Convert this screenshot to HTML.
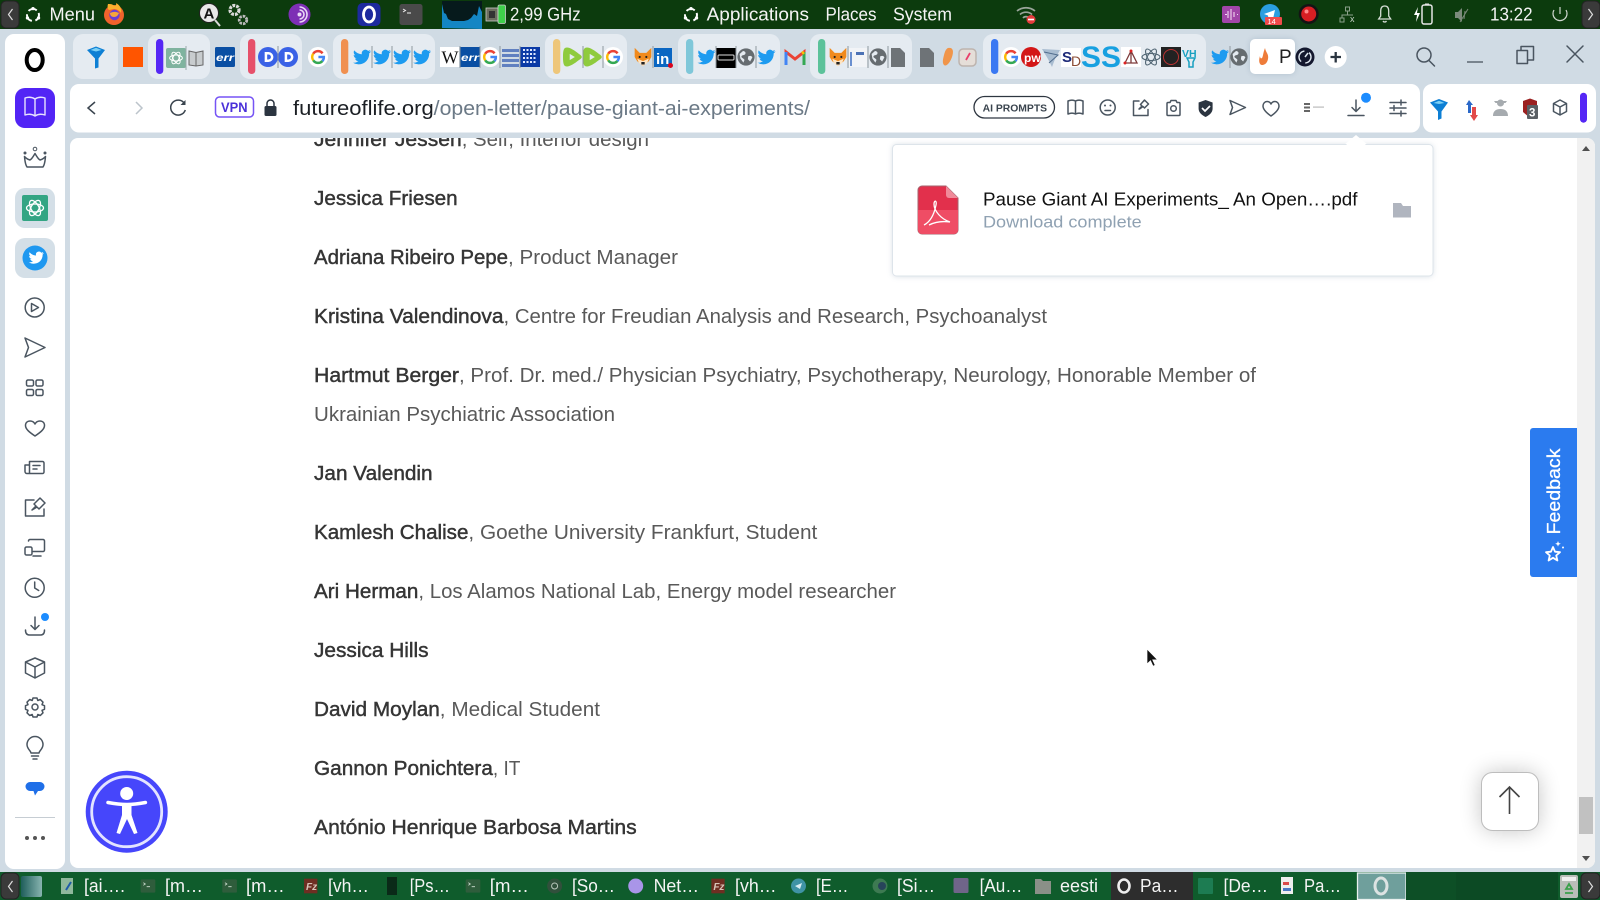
<!DOCTYPE html>
<html><head><meta charset="utf-8"><title>Pause Giant AI Experiments</title>
<style>
html,body{margin:0;padding:0;width:1600px;height:900px;overflow:hidden;background:#d0dbe4}
svg{display:block}
text{font-family:"Liberation Sans",sans-serif;white-space:pre}
.b{font-size:20.5px;font-weight:400;fill:#353535;stroke:#353535;stroke-width:.45px}
.r{font-size:20.5px;fill:#595959}
.w{font-size:18.5px;fill:#f4f4f4}
.s{fill:none;stroke:#4a5560;stroke-width:1.5;stroke-linecap:round;stroke-linejoin:round}
.d{fill:#e5ebf1}
</style></head><body>
<svg width="1600" height="900" viewBox="0 0 1600 900" xmlns="http://www.w3.org/2000/svg">
<defs>
<symbol id="tw" viewBox="0 0 24 24"><path fill="#1d9bf0" d="M23.95 4.57a10 10 0 01-2.82.77 4.96 4.96 0 002.16-2.72c-.95.55-2 .96-3.12 1.19a4.92 4.92 0 00-8.38 4.48C7.69 8.09 4.07 6.13 1.64 3.16a4.82 4.82 0 00-.67 2.48c0 1.71.87 3.21 2.19 4.1a4.9 4.9 0 01-2.23-.62v.06c0 2.38 1.7 4.37 3.95 4.83-.41.11-.85.17-1.3.17-.31 0-.62-.03-.92-.08.63 1.96 2.45 3.39 4.61 3.43A9.87 9.87 0 010 19.54a14 14 0 007.56 2.21c9.05 0 14-7.5 14-13.98 0-.21 0-.42-.02-.63a9.9 9.9 0 002.46-2.55z"/></symbol>
<symbol id="g" viewBox="0 0 24 24"><circle cx="12" cy="12" r="12" fill="#fff"/><path d="M17.5 7.6A7 7 0 0 0 6.3 8" fill="none" stroke="#ea4335" stroke-width="3"/><path d="M6.3 8a7 7 0 0 0 0 8" fill="none" stroke="#fbbc05" stroke-width="3"/><path d="M6.3 16a7 7 0 0 0 11 .8" fill="none" stroke="#34a853" stroke-width="3"/><path d="M17.3 16.8A7 7 0 0 0 19 12h-6.5" fill="none" stroke="#4285f4" stroke-width="3"/></symbol>
<symbol id="globe" viewBox="0 0 24 24"><circle cx="12" cy="12" r="11.500" fill="#666c70"/><path d="M8 4c3 .5 4 2 3 4s-4 1-5 3 3 2.500 4 5l-1.500 3.500-4-5.500-1-6zM15 11c3-1 4.500-.5 5.500 1.500l-3 5.500-3-3z" fill="#e5ebf1"/></symbol>
<symbol id="fox" viewBox="0 0 24 24"><path d="M2 1l6 6h8l6-6v11l-3 5-7 6-7-6-3-5z" fill="#f08a1d"/><path d="M5 14l7 3 7-3-2 5-5 4-5-4z" fill="#fde3c2"/><rect x="10" y="18" width="4" height="3" fill="#222"/><circle cx="8" cy="12" r="1.300" fill="#222"/><circle cx="16" cy="12" r="1.300" fill="#222"/></symbol>
<symbol id="dd" viewBox="0 0 24 24"><circle cx="12" cy="12" r="12" fill="#3a62e6"/><path d="M8 6h4.500a6 6 0 0 1 0 12H8zM11 9v6h1.500a3 3 0 0 0 0-6z" fill="#fff" fill-rule="evenodd"/></symbol>
<symbol id="play" viewBox="0 0 24 24"><path d="M5 0C1 0 0 3 0 12s1 12 5 12c4 0 10-4 15-8 5-3 5-5 0-8C15 4 9 0 5 0z" fill="#8fcb3d"/><path d="M8.500 8l6.500 4-6.500 4z" fill="#e5ebf1"/></symbol>
<symbol id="gpt" viewBox="0 0 24 24" ><g fill="none" stroke="#fff" stroke-width="1.300"><ellipse cx="12" cy="12" rx="8.500" ry="4"/><ellipse cx="12" cy="12" rx="8.500" ry="4" transform="rotate(60 12 12)"/><ellipse cx="12" cy="12" rx="8.500" ry="4" transform="rotate(120 12 12)"/></g></symbol>
<symbol id="term" viewBox="0 0 24 24"><rect x="1" y="2" width="22" height="20" rx="2" fill="#2f5d3c"/><path d="M5 7l3 2-3 2M10 13h5" stroke="#cfe0d2" fill="none" stroke-width="1.200"/></symbol>
<symbol id="fz" viewBox="0 0 24 24"><rect x="2" y="1" width="20" height="22" fill="#6e2e22"/><text x="5" y="18" font-size="15" font-weight="700" font-style="italic" fill="#d8c4b8">Fz</text></symbol>
<symbol id="ub" viewBox="0 0 24 24"><circle cx="12" cy="12" r="8" fill="none" stroke="#fff" stroke-width="2.600" stroke-dasharray="12 4.800" transform="rotate(-20 12 12)"/><circle cx="12" cy="3.500" r="2.200" fill="#fff"/><circle cx="4.600" cy="16" r="2.200" fill="#fff"/><circle cx="19.400" cy="16" r="2.200" fill="#fff"/></symbol>
</defs>

<!-- backgrounds -->
<rect width="1600" height="900" fill="#d0dbe4"/>
<rect width="1600" height="29" fill="#0c3b0d"/>
<rect y="872" width="1600" height="28" fill="#0f5c2c"/>
<rect x="5" y="34" width="60" height="835" rx="9" fill="#fff"/>

<!-- page content -->
<rect x="70" y="138" width="1525" height="730" rx="8" fill="#fff"/>
<g>
<text class="b" x="314" y="146" textLength="147.700" lengthAdjust="spacingAndGlyphs">Jennifer Jessen</text><text class="r" x="461.700" y="146" textLength="187.300" lengthAdjust="spacingAndGlyphs">, Self, Interior design</text>
<text class="b" x="314" y="205" textLength="143.700" lengthAdjust="spacingAndGlyphs">Jessica Friesen</text>
<text class="b" x="314" y="264" textLength="194" lengthAdjust="spacingAndGlyphs">Adriana Ribeiro Pepe</text><text class="r" x="508" y="264" textLength="170" lengthAdjust="spacingAndGlyphs">, Product Manager</text>
<text class="b" x="314" y="323" textLength="189.500" lengthAdjust="spacingAndGlyphs">Kristina Valendinova</text><text class="r" x="503.500" y="323" textLength="543.500" lengthAdjust="spacingAndGlyphs">, Centre for Freudian Analysis and Research, Psychoanalyst</text>
<text class="b" x="314" y="382" textLength="145" lengthAdjust="spacingAndGlyphs">Hartmut Berger</text><text class="r" x="459" y="382" textLength="797" lengthAdjust="spacingAndGlyphs">, Prof. Dr. med./ Physician Psychiatry, Psychotherapy, Neurology, Honorable Member of</text>
<text class="r" x="314" y="421" textLength="301" lengthAdjust="spacingAndGlyphs">Ukrainian Psychiatric Association</text>
<text class="b" x="314" y="480" textLength="118.600" lengthAdjust="spacingAndGlyphs">Jan Valendin</text>
<text class="b" x="314" y="539" textLength="154.400" lengthAdjust="spacingAndGlyphs">Kamlesh Chalise</text><text class="r" x="468.400" y="539" textLength="348.900" lengthAdjust="spacingAndGlyphs">, Goethe University Frankfurt, Student</text>
<text class="b" x="314" y="598" textLength="104.400" lengthAdjust="spacingAndGlyphs">Ari Herman</text><text class="r" x="418.400" y="598" textLength="477.600" lengthAdjust="spacingAndGlyphs">, Los Alamos National Lab, Energy model researcher</text>
<text class="b" x="314" y="657" textLength="114.600" lengthAdjust="spacingAndGlyphs">Jessica Hills</text>
<text class="b" x="314" y="716" textLength="125.800" lengthAdjust="spacingAndGlyphs">David Moylan</text><text class="r" x="439.800" y="716" textLength="160.200" lengthAdjust="spacingAndGlyphs">, Medical Student</text>
<text class="b" x="314" y="775" textLength="178.900" lengthAdjust="spacingAndGlyphs">Gannon Ponichtera</text><text class="r" x="492.900" y="775" textLength="27.500" lengthAdjust="spacingAndGlyphs">, IT</text>
<text class="b" x="314" y="834" textLength="322.700" lengthAdjust="spacingAndGlyphs">António Henrique Barbosa Martins</text>
</g>
<!-- strip hiding clipped text -->
<rect x="70" y="130" width="1530" height="8" fill="#d0dbe4"/>
<rect x="1595" y="130" width="5" height="740" fill="#d0dbe4"/>

<!-- scrollbar -->
<path d="M1577 138h10a8 8 0 0 1 8 8v714a8 8 0 0 1-8 8h-10z" fill="#f1f1f1"/>
<rect x="1579" y="797" width="14" height="37" fill="#c1c1c1"/>
<path d="M1582 151l4-5 4 5z" fill="#505050"/><path d="M1582 856l4 5 4-5z" fill="#505050"/>

<!-- feedback -->
<path d="M1577 428h-44a3 3 0 0 0-3 3v143a3 3 0 0 0 3 3h44z" fill="#2b7bef"/>
<text transform="translate(1560,534.500) rotate(-90)" font-size="18.500" font-weight="400" fill="#fff" textLength="86" lengthAdjust="spacingAndGlyphs" stroke="#fff" stroke-width=".3">Feedback</text>
<path d="M1553 547l2 4.700 5 .5-3.800 3.300 1.200 5-4.400-2.700-4.400 2.700 1.200-5-3.800-3.300 5-.5z" fill="none" stroke="#fff" stroke-width="1.800" stroke-linejoin="round"/>
<path d="M1558 541l.8 2 2 .8-2 .8-.8 2-.8-2-2-.8 2-.8z" fill="#fff"/><circle cx="1563" cy="547.500" r="1" fill="#fff"/>

<!-- scroll top -->
<defs><filter id="sh" x="-60%" y="-60%" width="220%" height="220%"><feGaussianBlur stdDeviation="11"/></filter><filter id="sh2" x="-30%" y="-30%" width="160%" height="160%"><feGaussianBlur stdDeviation="3"/></filter></defs>
<rect x="1481" y="772" width="58" height="59" rx="12" fill="#000" opacity=".22" filter="url(#sh)"/>
<rect x="1481.500" y="772.500" width="57" height="58" rx="11" fill="#fff" stroke="#bdbdbd"/>
<path d="M1509.500 814v-27M1499.500 797l10-10 10 10" fill="none" stroke="#444" stroke-width="1.600"/>

<!-- accessibility -->
<circle cx="126.700" cy="811.700" r="41" fill="#4646fb"/>
<circle cx="126.700" cy="811.700" r="35" fill="none" stroke="#e3e4ff" stroke-width="2.800"/>
<circle cx="126.700" cy="793.500" r="6.500" fill="#fff"/>
<path d="M108 802.500c8 1.500 14 2 18.700 2s10.700-.5 18.700-2" fill="none" stroke="#fff" stroke-width="3.500" stroke-linecap="round"/>
<path d="M122 804h9.500v11l6 18-3.500 1-7-15-7 15-3.500-1 5.500-18z" fill="#fff"/>

<!-- popup -->
<rect x="892.500" y="144.500" width="540.500" height="132" rx="4" fill="#8ea2b5" opacity=".35" filter="url(#sh2)"/>
<path d="M1344 145l12-10 12 10z" fill="#fff"/>
<rect x="892.500" y="144.500" width="540.500" height="131.500" rx="4" fill="#fff" stroke="#dde4ea"/>
<path d="M1346 145l10-9 10 9z" fill="#fff"/>
<path d="M922 186h24l12 12v32a4 4 0 0 1-4 4h-32a4 4 0 0 1-4-4v-40a4 4 0 0 1 4-4z" fill="#e2304c" stroke="#a5636e"/>
<path d="M918 210h40v20a4 4 0 0 1-4 4h-32a4 4 0 0 1-4-4z" fill="#ef4d65"/>
<path d="M946 186l12 12h-9a3 3 0 0 1-3-3z" fill="#f08a99"/>
<path d="M924 225c6-3 10-10 12-20 1-5-2-5-2-1 0 7 7 15 16 18-7-1-15 0-21 3" fill="none" stroke="#fff" stroke-width="1.300"/>
<text x="983" y="205.500" font-size="18.500" fill="#111" textLength="374.500" lengthAdjust="spacingAndGlyphs">Pause Giant AI Experiments_ An Open….pdf</text>
<text x="983" y="227.500" font-size="17" fill="#8fa1b2" textLength="158.700" lengthAdjust="spacingAndGlyphs">Download complete</text>
<path d="M1393 203h8l2 3h8v11.500h-18z" fill="#b0b5bf"/>

<!-- sidebar -->
<ellipse cx="34.700" cy="60" rx="8" ry="10" fill="none" stroke="#000" stroke-width="4"/>
<rect x="15" y="88" width="40" height="40" rx="10" fill="#5224f5"/>
<path d="M35 99c-3-2-7-2-10-1v17c3-1 7-1 10 1 3-2 7-2 10-1V98c-3-1-7-1-10 1zM35 99v17" fill="none" stroke="#e7e2ff" stroke-width="1.400" stroke-linejoin="round"/>
<path class="s" d="M27 167h16c2-3 2-6 2.500-10.500-2 2.500-4 3-5.500 3.500-2-1-3.500-4-5-6.500-1.500 2.500-3 5.500-5 6.500-1.500-.5-3.500-1-5.500-3.500.5 4.500.5 7.500 2.500 10.500z"/><circle cx="35" cy="149" r="1.800" fill="none" stroke="#4a5560"/><circle cx="25" cy="153" r="1.500" fill="#4a5560"/><circle cx="45" cy="153" r="1.500" fill="#4a5560"/>
<rect x="15" y="188" width="40" height="40" rx="10" fill="#d4dfe7"/>
<rect x="22" y="195" width="26" height="26" rx="2" fill="#33a583"/><use href="#gpt" x="23" y="196" width="24" height="24"/>
<rect x="15" y="238" width="40" height="40" rx="10" fill="#d4dfe7"/>
<circle cx="35" cy="258" r="12.500" fill="#1f98f0"/>
<path d="M44 253a6 6 0 0 1-2 .6 3 3 0 0 0 1.300-1.700 6 6 0 0 1-2 .8 3 3 0 0 0-5.200 2.800c-2.500 0-5-1.300-6.500-3.200a3 3 0 0 0 1 4 3 3 0 0 1-1.400-.4 3 3 0 0 0 2.400 3 3 3 0 0 1-1.400.1 3 3 0 0 0 2.900 2.100 6 6 0 0 1-4.400 1.200c5.500 3.500 14 .5 14-7.900a6 6 0 0 0 1.300-1.400z" fill="#fff"/>
<circle class="s" cx="34.700" cy="307.500" r="9.500"/><path class="s" d="M31.500 303.500l7 4-7 4z"/>
<path class="s" d="M25 338l20 9.500-20 9.500 3.500-9.500z"/>
<g class="s"><rect x="26.500" y="380" width="7" height="6" rx="1.500"/><rect x="36" y="380" width="7" height="6" rx="1.500"/><rect x="26.500" y="389.500" width="7" height="6" rx="1.500"/><rect x="36" y="389.500" width="7" height="6" rx="1.500"/></g>
<path class="s" d="M35 436c-6-4-9.500-7-9.500-10.500 0-3 2-4.500 4.500-4.500 2 0 4 1 5 3 1-2 3-3 5-3 2.500 0 4.500 1.500 4.500 4.500C44.500 429 41 432 35 436z"/>
<path class="s" d="M29.500 461.500h13a1.500 1.500 0 0 1 1.500 1.500v9a1.500 1.500 0 0 1-1.500 1.500H27a2 2 0 0 1-2-2v-6.500h4.500M29.500 461.500v12M33 465.500h7M33 469h4"/>
<path class="s" d="M34 500h-8.500v16H44v-7M32 510l4-4-2-2 6-6 5 5-6 6-2-2-5 3z"/>
<path class="s" d="M28.500 541a1.500 1.500 0 0 1 1.500-1.500h13a1.500 1.500 0 0 1 1.500 1.500v9a1.500 1.500 0 0 1-1.500 1.500H33M33 556h8"/><rect class="s" x="25" y="547" width="7" height="8" rx="1.500"/>
<circle class="s" cx="34.700" cy="587.800" r="9.500"/><path class="s" d="M34.700 582v6l4 2.500"/>
<path class="s" d="M35 617v12M31 625.500l4 4 4-4M25.500 630c0 4 2 5 4 5h11c2 0 4-1 4-5"/><circle cx="45" cy="617" r="4" fill="#1c8cff"/>
<path class="s" d="M35 658l9.500 4v11L35 678l-9.500-5v-11zM25.500 662l9.500 5 9.500-5M35 667v11"/>
<circle class="s" cx="35" cy="707" r="3"/><path class="s" d="M33 698h4l.8 2.500 2.500-1 2.700 2.700-1 2.500 2.500 1v3.600l-2.500 1 1 2.500-2.700 2.700-2.500-1-.8 2.500h-4l-.8-2.500-2.500 1-2.700-2.700 1-2.500-2.500-1v-3.600l2.500-1-1-2.500 2.700-2.700 2.500 1z"/>
<path class="s" d="M31 753c0-2-4-4-4-8.500a8 8 0 0 1 16 0c0 4.500-4 6.500-4 8.500zM31.500 756h7M33 759h4"/>
<path d="M30 782h10a4.500 4.500 0 0 1 0 9h-2l-3 4.500-1.500-4.500H30a4.500 4.500 0 0 1 0-9z" fill="#1f6fe8"/>
<rect x="15" y="817" width="40" height="1" fill="#c6cdd3"/>
<circle cx="27" cy="838" r="2" fill="#555"/><circle cx="35" cy="838" r="2" fill="#555"/><circle cx="43" cy="838" r="2" fill="#555"/>

<!-- tab strip -->
<rect class="d" x="73" y="34" width="45" height="45" rx="10"/>
<path d="M87 50l9-3.500 9 3.500-6.500 8.500v9l-3.500 1v-10z" fill="#0d7fd4"/><path d="M90.500 50l5.500-2.200 5.500 2.200-5.500 1.500z" fill="#7cd0f5"/>
<rect x="123" y="47" width="20" height="20" fill="#ff5500"/>
<rect class="d" x="148" y="34" width="62" height="45" rx="10"/>
<rect x="156" y="39" width="7.300" height="35" rx="3.600" fill="#5527f5"/>
<rect x="166" y="48" width="20" height="20" rx="2" fill="#7fb39f"/><use href="#gpt" x="167" y="49" width="18" height="18"/>
<rect x="185.500" y="46" width="1" height="24" fill="#9aa"/>
<path d="M189 51l7 1.500 7-1.500v14l-7 1-7-1zM196 52.500V66" fill="#c8ccce" stroke="#666" stroke-width="1"/>
<rect x="215" y="47" width="20" height="20" rx="1.500" fill="#0a4fa3"/><text x="216" y="61" font-size="10.500" font-style="italic" font-weight="700" fill="#fff" textLength="18" lengthAdjust="spacingAndGlyphs">err</text>
<rect class="d" x="240" y="34" width="62" height="45" rx="10"/>
<rect x="248" y="39" width="7.300" height="35" rx="3.600" fill="#e6506a"/>
<use href="#dd" x="258" y="47" width="20" height="20"/><use href="#dd" x="278" y="47" width="20" height="20"/>
<use href="#g" x="308" y="47" width="20" height="20"/>
<rect class="d" x="333" y="34" width="102" height="45" rx="10"/>
<rect x="341" y="39" width="7.300" height="35" rx="3.600" fill="#f09050"/>
<use href="#tw" x="352" y="48" width="20" height="18"/><use href="#tw" x="372" y="48" width="20" height="18"/><use href="#tw" x="392" y="48" width="20" height="18"/><use href="#tw" x="412" y="48" width="20" height="18"/>
<rect x="440" y="47" width="19" height="20" fill="#fff"/><text x="441.500" y="63.500" style="font-family:'Liberation Serif',serif" font-size="18" fill="#111">W</text>
<rect x="460" y="47" width="20" height="20" fill="#0a4fa3"/><text x="461" y="61" font-size="10.500" font-style="italic" font-weight="700" fill="#fff" textLength="18" lengthAdjust="spacingAndGlyphs">err</text>
<use href="#g" x="480" y="47" width="20" height="20"/>
<g fill="#3b62b5" opacity=".75"><rect x="502" y="49" width="17" height="3"/><rect x="502" y="54" width="17" height="3"/><rect x="502" y="59" width="17" height="3"/><rect x="502" y="64" width="17" height="3"/></g>
<rect x="520" y="47" width="20" height="20" fill="#0b3aa6"/><path d="M523 50h14M523 54h14M523 58h14M523 62h14" stroke="#dfe8ff" stroke-width="2" stroke-dasharray="2 1.500"/>
<rect class="d" x="545" y="34" width="82" height="45" rx="10"/>
<rect x="553" y="39" width="7.300" height="35" rx="3.600" fill="#eec67a"/>
<use href="#play" x="563" y="47" width="19" height="20"/><use href="#play" x="583" y="47" width="19" height="20"/>
<use href="#g" x="603" y="47" width="20" height="20"/>
<use href="#fox" x="633" y="47" width="20" height="20"/>
<rect x="654" y="48" width="18" height="19" fill="#0a66c2"/><text x="656" y="64" font-size="15" font-weight="700" fill="#fff">in</text><circle cx="670.500" cy="65.500" r="2.500" fill="#d9041d"/>
<rect class="d" x="678" y="34" width="102" height="45" rx="10"/>
<rect x="686" y="39" width="7.300" height="35" rx="3.600" fill="#7fc7d9"/>
<use href="#tw" x="697" y="48" width="19" height="18"/>
<rect x="716" y="48" width="20" height="20" fill="#000"/><rect x="718" y="55" width="16" height="5" rx="1" fill="none" stroke="#ddd"/>
<use href="#globe" x="737" y="48" width="18" height="18"/>
<use href="#tw" x="757" y="48" width="19" height="18"/>
<path d="M786 65V52l9 7 9-7v13" fill="none" stroke="#ea4335" stroke-width="3"/><path d="M786 52v13" stroke="#4285f4" stroke-width="3"/><path d="M804 52v13" stroke="#34a853" stroke-width="3"/><path d="M804 52l-2 1.500" stroke="#fbbc05" stroke-width="3"/>
<rect class="d" x="810" y="34" width="102" height="45" rx="10"/>
<rect x="818" y="39" width="7.300" height="35" rx="3.600" fill="#5cc29a"/>
<use href="#fox" x="828" y="47" width="20" height="20"/>
<rect x="849" y="48" width="18" height="19" fill="#f2f4f7"/><rect x="850" y="52" width="2" height="14" fill="#6a8fcf"/><rect x="856" y="52" width="8" height="3" fill="#4c72b5"/>
<use href="#globe" x="869" y="48" width="18" height="18"/>
<path d="M891 48h9l5 5v14h-14z" fill="#6e7377"/>
<path d="M920 48h9l5 5v14h-14z" fill="#6e7377"/>
<path d="M948 48c5-1 6 3 4 9s-6 10-8 8-1-6 0-10 2-6 4-7z" fill="#f0954a"/>
<rect x="959" y="49" width="17" height="17" rx="4" fill="#e5ded8" stroke="#bdb4ae" stroke-width="1.500"/><path d="M966 60l4-7" stroke="#e83f6a" stroke-width="1.800"/>
<rect class="d" x="983" y="34" width="223" height="45" rx="10"/>
<rect x="991" y="39" width="7.300" height="35" rx="3.600" fill="#3a78f2"/>
<use href="#g" x="1001" y="47" width="20" height="20"/>
<circle cx="1031" cy="57" r="10" fill="#d31717"/><text x="1024" y="62" font-size="12" font-weight="700" fill="#fff">pw</text>
<path d="M1042 49l18 1-5 9-3 8-4-8z" fill="#a9bdd1"/><path d="M1044 52l14 3-9 8" stroke="#506c8c" fill="none"/>
<rect x="1061" y="48" width="20" height="19" fill="#fff"/><text x="1062" y="62" font-size="15" font-weight="700" fill="#1d2a78">S</text><text x="1071" y="66" font-size="14" fill="#8a4b34">D</text>
<text x="1081" y="67" font-size="30" fill="#18a0e0" font-weight="700" textLength="20" lengthAdjust="spacingAndGlyphs">S</text><text x="1101" y="67" font-size="30" fill="#18a0e0" font-weight="700" textLength="20" lengthAdjust="spacingAndGlyphs">S</text>
<rect x="1121" y="47" width="20" height="20" fill="#fff"/><path d="M1125 63l6-12 6 12zM1131 51v12" fill="none" stroke="#7d3b3b" stroke-width="1.300"/><circle cx="1131" cy="51" r="1.500" fill="#d22"/><circle cx="1125" cy="63" r="1.500" fill="#d22"/>
<g fill="none" stroke="#4d6270" stroke-width="1.100"><ellipse cx="1151" cy="57" rx="9" ry="3.500"/><ellipse cx="1151" cy="57" rx="9" ry="3.500" transform="rotate(60 1151 57)"/><ellipse cx="1151" cy="57" rx="9" ry="3.500" transform="rotate(120 1151 57)"/></g>
<rect x="1161" y="47" width="20" height="20" fill="#222"/><circle cx="1171" cy="57" r="7.500" fill="none" stroke="#b33"/>
<text x="1182" y="57" font-size="10.500" font-weight="700" fill="#18a0c0">VH</text><path d="M1187 58h8l-2 4v5h-4v-5z" fill="none" stroke="#18a0c0" stroke-width="1.500"/>
<use href="#tw" x="1211" y="48" width="18" height="18"/>
<use href="#globe" x="1230" y="48" width="18" height="18"/>
<rect x="1250" y="39" width="45" height="35" rx="5" fill="#8ea2b5" opacity=".45" filter="url(#sh2)"/>
<rect x="1250" y="39" width="45" height="35" rx="5" fill="#fff"/>
<path d="M1265 48c1 5 4 6 3 11s-4 6-6 6-4-3-2-9c0 2 1 3 2 2s1-5 3-10z" fill="#ee7c3a"/>
<text x="1279" y="63" font-size="19" fill="#222">P</text>
<circle cx="1305" cy="57" r="9.500" fill="#14182e"/><circle cx="1305" cy="57" r="6" fill="none" stroke="#dfe7ef" stroke-width="1.400" stroke-dasharray="14 5" transform="rotate(130 1305 57)"/><path d="M1305 57l3-4" stroke="#dfe7ef" stroke-width="1.500"/>
<circle cx="1335.700" cy="57" r="11" fill="#fff"/><path d="M1330.500 57h10.500M1335.700 52v10.500" stroke="#2a3440" stroke-width="2.300"/>

<!-- window controls -->
<circle class="s" cx="1424" cy="55" r="7"/><path class="s" d="M1429 60.500l5.500 5.500"/>
<path d="M1467 62h16" stroke="#4a5560" stroke-width="1.300"/>
<path class="s" d="M1517 50.500h10.500v13H1517zM1521 50v-3.500h12.500V60H1528" stroke-width="1.200"/>
<path class="s" d="M1567 46l16 16M1583 46l-16 16" stroke-width="1.300"/>

<!-- address bar -->
<rect x="70" y="84" width="1350" height="48.500" rx="9" fill="#fff"/>
<path d="M95 102l-7 6 7 6" fill="none" stroke="#3a444e" stroke-width="1.500"/>
<path d="M136 102l6 6-6 6" fill="none" stroke="#bcc4cb" stroke-width="1.500"/>
<path d="M184.500 103.500a7.500 7.500 0 1 0 .8 6.500" fill="none" stroke="#3a444e" stroke-width="1.500"/><path d="M185.500 100v5h-5" fill="#3a444e"/>
<rect x="215.500" y="97" width="38" height="20" rx="4" fill="#fff" stroke="#7654f5" stroke-width="1.500"/>
<text x="221" y="112" font-size="13.500" font-weight="700" fill="#4a30d9" textLength="26.500" lengthAdjust="spacingAndGlyphs">VPN</text>
<rect x="264.500" y="106" width="12" height="10" rx="1.500" fill="#2b3440"/><path d="M267 106v-2.500a3.500 3.500 0 0 1 7 0v2.500" fill="none" stroke="#2b3440" stroke-width="1.500"/>
<text x="293" y="115" font-size="20" fill="#1b1f24" textLength="140.700" lengthAdjust="spacingAndGlyphs">futureoflife.org</text>
<text x="433.700" y="115" font-size="20" fill="#6b7986" textLength="376.300" lengthAdjust="spacingAndGlyphs">/open-letter/pause-giant-ai-experiments/</text>

<rect x="974" y="96.500" width="80.500" height="21.500" rx="10.700" fill="#fff" stroke="#2e3640" stroke-width="1.300"/>
<text x="982.600" y="111.500" font-size="10" font-weight="700" fill="#3a444e" textLength="64.500" lengthAdjust="spacingAndGlyphs">AI PROMPTS</text>
<path class="s" d="M1075.500 101c-2-1-5-1-7.500 0v13c2.500-1 5.500-1 7.500 0 2-1 5-1 7.500 0v-13c-2.500-1-5.500-1-7.500 0zM1075.500 101v13"/>
<circle class="s" cx="1107.700" cy="107.500" r="7.500"/><circle cx="1105" cy="105.500" r="1" fill="#4a5560"/><circle cx="1110.500" cy="105.500" r="1" fill="#4a5560"/><path class="s" d="M1105 110.500h5.500"/>
<path class="s" d="M1139 101h-5.500v14.500H1148v-6M1139 109l3-3-1.500-1.500 4-4.500 4 4-4 4-1.500-1.500-3.500 2.500z"/>
<path class="s" d="M1168 102.500h2l1-2h5l1 2h2a1 1 0 0 1 1 1v11a1 1 0 0 1-1 1h-11a1 1 0 0 1-1-1v-11a1 1 0 0 1 1-1z"/><circle class="s" cx="1173.500" cy="108.500" r="2.800"/>
<path d="M1205.600 100l7 2.500v6c0 4-3 6.500-7 8.500-4-2-7-4.500-7-8.500v-6z" fill="#2b3440"/><path d="M1202 108l3 3 5-5" fill="none" stroke="#fff" stroke-width="1.700"/>
<path class="s" d="M1230 100.500l15.500 7-15.500 7 2.500-7z"/>
<path class="s" d="M1271 116c-5-3.500-8-6.500-8-10 0-2.500 1.800-4.500 4-4.500 1.800 0 3.200.9 4 2.500.8-1.600 2.200-2.500 4-2.500 2.200 0 4 2 4 4.500 0 3.500-3 6.500-8 10z"/>
<rect x="1304" y="103" width="6" height="2" fill="#666"/><rect x="1304" y="106.500" width="6" height="2" fill="#666"/><rect x="1304" y="110" width="6" height="2" fill="#666"/><rect x="1313" y="106.500" width="11" height="1.200" fill="#bbb"/>
<path class="s" d="M1356 100v11M1352 107.500l4 4 4-4M1348 115.500h16" stroke="#3a444e"/><circle cx="1366" cy="97.700" r="5" fill="#1c8cff"/>
<path class="s" d="M1390 102.500h16M1390 108h16M1390 113.500h16M1401 100v5M1394 105.500v5M1401 111v5" stroke="#3a444e"/>

<rect x="1423" y="84" width="173" height="48.500" rx="9" fill="#fff"/>
<path d="M1430 102.500l9-3.500 9 3.500-6.500 9v7l-3.500 1.500v-8.500z" fill="#0d7fd4"/><path d="M1433.500 103l5.500-2.200 5.500 2.200-5.500 1z" fill="#7cd0f5"/>
<path d="M1469 100l4 5h-2v8h-3v-8h-2z" fill="#2a68c8"/><path d="M1472 107h4v8h2l-4 6-4-6h2z" fill="#e24a4a"/>
<circle cx="1500.500" cy="103" r="3.500" fill="#a6abaf"/><path d="M1494 101h13l-1.500 2h-10zM1493 116c0-5 3-7 7.500-7s7.500 2 7.500 7z" fill="#a6abaf"/>
<path d="M1523 101l7-2.500 7 2.500v8l-7 9-7-6z" fill="#9b2020"/><rect x="1527" y="105" width="11" height="14" rx="1" fill="#5a5f64"/><text x="1529" y="116.500" font-size="11.500" font-weight="700" fill="#fff">3</text>
<path class="s" d="M1560 100l6.500 3.500v8l-6.500 3.500-6.500-3.500v-8zM1553.500 103.500l6.500 3.500 6.500-3.500M1560 107v8"/>
<rect x="1580" y="92.700" width="7" height="30" rx="3.500" fill="#5527f5"/>

<!-- top panel -->
<rect x="1" y="1" width="18" height="27" rx="5" fill="#3a3a3a" stroke="#222"/>
<path d="M12.500 9l-4 5.500 4 5.500" fill="none" stroke="#ddd" stroke-width="1.200"/>
<use href="#ub" x="24" y="6" width="18" height="18"/>
<text class="w" x="49.500" y="20.500" textLength="45.500" lengthAdjust="spacingAndGlyphs">Menu</text>
<circle cx="114" cy="15" r="10" fill="#f0632c"/><path d="M108 4c-1 3 0 5 1 6l5-1c3 0 6 2 7 4 1-4-1-8-5-10 1 3-2 3-3 2s-3-1-5-1z" fill="#fbb02d"/><circle cx="114.500" cy="15" r="5.200" fill="#6a3fd0"/><path d="M110 13c2-1 5-2 9 0-1 2-2 4-5 4s-4-2-4-4z" fill="#f5a53a"/>
<circle cx="209" cy="13" r="9.500" fill="#e8e8e8" stroke="#222"/><text x="203.500" y="18.500" font-size="15" font-weight="700" fill="#111">A</text><path d="M215 20l5 6" stroke="#d8d8d8" stroke-width="2"/>
<circle cx="234.500" cy="10" r="4.500" fill="none" stroke="#d9d9d9" stroke-width="3.200" stroke-dasharray="2.800 1"/><circle cx="243" cy="20" r="3.800" fill="none" stroke="#bbb" stroke-width="2.800" stroke-dasharray="2.500 1"/>
<circle cx="299.500" cy="14.500" r="11" fill="#7d2fb5"/><path d="M299.500 7a7.500 7.500 0 0 1 0 15M299.500 10a4.500 4.500 0 0 1 0 9" fill="none" stroke="#e9d9f5" stroke-width="1.600"/><circle cx="299.500" cy="14.500" r="2" fill="#e9d9f5"/>
<rect x="357.500" y="3" width="23" height="23" rx="5" fill="#1d2a9e"/><ellipse cx="369" cy="14.500" rx="5.500" ry="7.500" fill="none" stroke="#fff" stroke-width="2.800"/>
<rect x="399.500" y="4" width="23" height="21" rx="2.500" fill="#4a4a4a"/><path d="M403 9l2.500 1.500L403 12M407 13h4" fill="none" stroke="#eee" stroke-width="1"/>
<rect x="442" y="1" width="40" height="27" fill="#061a1c"/><path d="M442 28V4l2 9 2 1 2 5 4 2h12l4-1 3-2 3-4 3 2 2-10 3 6v17z" fill="#1486c4"/>
<rect x="486" y="8" width="12" height="13" fill="#6b6f5e" stroke="#ccc" stroke-width=".8"/><rect x="489" y="11" width="6" height="7" fill="#333"/>
<rect x="498" y="5" width="7.500" height="18.500" rx="1.500" fill="#3fd14a" stroke="#ccc" stroke-width=".8"/>
<text class="w" x="510" y="20.500" textLength="70.600" lengthAdjust="spacingAndGlyphs">2,99 GHz</text>
<use href="#ub" x="682" y="6" width="18" height="18"/>
<text class="w" x="706.600" y="20.500" textLength="102.400" lengthAdjust="spacingAndGlyphs">Applications</text>
<text class="w" x="825.500" y="20.500" textLength="51" lengthAdjust="spacingAndGlyphs">Places</text>
<text class="w" x="893" y="20.500" textLength="59" lengthAdjust="spacingAndGlyphs">System</text>
<path d="M1017 11a14 14 0 0 1 18 0M1020 14.500a9 9 0 0 1 12 0M1023 18a4 4 0 0 1 6 0" fill="none" stroke="#9aa59a" stroke-width="1.700"/><circle cx="1031" cy="19.500" r="4.500" fill="#e33c3c"/><rect x="1028" y="18.700" width="6" height="1.600" fill="#fff"/>
<rect x="1222" y="6" width="18" height="17" rx="2" fill="#a146a8"/><path d="M1225 14.500h2M1228 11v7M1231 9v11M1234 12v5M1237 14.500h1" stroke="#f2d9f2" stroke-width="1.100"/>
<circle cx="1270" cy="14" r="10" fill="#2a9ee0"/><path d="M1264 14l11-4-2 9-3-2-1.500 1.500-.5-3z" fill="#fff"/><rect x="1265" y="17" width="17" height="8" rx="1" fill="#ef4b4b"/><text x="1267.500" y="24" font-size="7.500" fill="#fff">14</text>
<circle cx="1308.700" cy="14" r="10" fill="#141414"/><circle cx="1308.700" cy="14" r="7.500" fill="#d81e23"/><circle cx="1306.500" cy="11.500" r="2" fill="#ff8a8a"/>
<rect x="1345.500" y="7" width="4" height="4" fill="none" stroke="#8aa08a"/><rect x="1340" y="18" width="4" height="4" fill="none" stroke="#8aa08a"/><path d="M1347.500 11v4M1342 18v-3h11" fill="none" stroke="#8aa08a"/><text x="1350" y="22" font-size="9" fill="#c8d4c8">x</text>
<path d="M1384.700 6c-3 0-4 2-4 5v5l-2 3h12l-2-3v-5c0-3-1-5-4-5zM1383 21a2 2 0 0 0 3.500 0" fill="none" stroke="#d5ddd5" stroke-width="1.300"/>
<rect x="1422" y="5" width="10" height="19" rx="2" fill="none" stroke="#e5e5e5" stroke-width="1.500"/><rect x="1425" y="3.500" width="4" height="1.500" fill="#e5e5e5"/><path d="M1418 7l-4 8h3l-1 7 4-9h-3z" fill="#fff"/>
<path d="M1455 12h3l4-4v14l-4-4h-3z" fill="#7b8a7b"/><path d="M1465 11l-1 8M1468 9l-8 13" stroke="#7b8a7b" stroke-width="1"/>
<text x="1490" y="20.500" font-size="18.500" fill="#f4f4f4" textLength="42.600" lengthAdjust="spacingAndGlyphs">13:22</text>
<path d="M1554 10a7 7 0 1 0 12 0M1560 7v7" fill="none" stroke="#ced6ce" stroke-width="1.200"/>
<rect x="1582" y="1" width="18" height="27" rx="5" fill="#3a3a3a" stroke="#222"/>
<path d="M1588.500 9l4 5.500-4 5.500" fill="none" stroke="#ddd" stroke-width="1.200"/>

<!-- bottom panel -->
<rect x="1" y="873" width="18" height="26" rx="5" fill="#3a3a3a" stroke="#222"/>
<path d="M12.500 881l-4 5.500 4 5.500" fill="none" stroke="#ddd" stroke-width="1.200"/>
<defs><linearGradient id="tg" x1="0" y1="0" x2="1" y2="0"><stop offset="0" stop-color="#1f5e5b"/><stop offset="1" stop-color="#88b4b0"/></linearGradient></defs>
<rect x="21" y="876" width="21" height="21" rx="2" fill="url(#tg)"/>
<rect x="61" y="878" width="12" height="16" fill="#8fb89c"/><path d="M66 890l5-8" stroke="#1e5ba8" stroke-width="2"/>
<text class="w" x="84" y="892" textLength="41" lengthAdjust="spacingAndGlyphs">[ai….</text>
<use href="#term" x="140" y="878" width="16" height="16"/><text class="w" x="165" y="892" textLength="38" lengthAdjust="spacingAndGlyphs">[m…</text>
<use href="#term" x="221.600" y="878" width="16" height="16"/><text class="w" x="246" y="892" textLength="38.700" lengthAdjust="spacingAndGlyphs">[m…</text>
<use href="#fz" x="302.700" y="878" width="16" height="16"/><text class="w" x="328" y="892" textLength="41" lengthAdjust="spacingAndGlyphs">[vh…</text>
<rect x="387" y="877" width="10" height="18" fill="#0a2a18"/><text class="w" x="409.700" y="892" textLength="40.300" lengthAdjust="spacingAndGlyphs">[Ps…</text>
<use href="#term" x="465" y="878" width="16" height="16"/><text class="w" x="489.800" y="892" textLength="39.200" lengthAdjust="spacingAndGlyphs">[m…</text>
<circle cx="554.600" cy="886" r="7.500" fill="#31503c"/><circle cx="554.600" cy="886" r="3" fill="none" stroke="#b8c6bb"/><text class="w" x="572" y="892" textLength="43" lengthAdjust="spacingAndGlyphs">[So…</text>
<circle cx="635.700" cy="886" r="7.500" fill="#a995e8"/><text class="w" x="653.600" y="892" textLength="45.400" lengthAdjust="spacingAndGlyphs">Net…</text>
<use href="#fz" x="710" y="878" width="16" height="16"/><text class="w" x="735" y="892" textLength="41.500" lengthAdjust="spacingAndGlyphs">[vh…</text>
<circle cx="798.500" cy="886" r="7.500" fill="#3f93a5"/><path d="M795 886l7-3-2 6z" fill="#d8edf2"/><text class="w" x="816" y="892" textLength="32.500" lengthAdjust="spacingAndGlyphs">[E…</text>
<circle cx="880" cy="886" r="7.500" fill="#3d7a52"/><circle cx="882" cy="886" r="4" fill="#27445a"/><text class="w" x="897" y="892" textLength="38" lengthAdjust="spacingAndGlyphs">[Si…</text>
<rect x="953.500" y="878" width="15" height="15" rx="1.500" fill="#6f6589"/><text class="w" x="979.600" y="892" textLength="42.800" lengthAdjust="spacingAndGlyphs">[Au…</text>
<path d="M1035 879h6l2 2h8v13h-16z" fill="#8a9088"/><text class="w" x="1060" y="892" textLength="38" lengthAdjust="spacingAndGlyphs">eesti</text>
<rect x="1111" y="872" width="82" height="28" fill="#2d2d2d"/>
<ellipse cx="1124" cy="886" rx="5.500" ry="6.500" fill="none" stroke="#eee" stroke-width="2.600"/><text class="w" x="1140" y="892" textLength="38.600" lengthAdjust="spacingAndGlyphs">Pa…</text>
<rect x="1198" y="878" width="15" height="16" rx="1" fill="#1d7c52"/><text class="w" x="1223.500" y="892" textLength="44.500" lengthAdjust="spacingAndGlyphs">[De…</text>
<rect x="1281" y="877" width="12" height="17" fill="#eee"/><rect x="1283" y="882" width="6" height="3" fill="#d94a4a"/><rect x="1283" y="888" width="8" height="3" fill="#4a78c4"/><text class="w" x="1304" y="892" textLength="37" lengthAdjust="spacingAndGlyphs">Pa…</text>
<rect x="1357.500" y="873" width="48.500" height="26.500" fill="#6f9f9c" stroke="#e8f0ef" stroke-width="1.300"/>
<ellipse cx="1381" cy="886" rx="6" ry="8" fill="none" stroke="#dde3e3" stroke-width="3"/>
<rect x="1406" y="872" width="50" height="28" fill="#0d4f26"/><rect x="1456" y="872" width="50" height="28" fill="#0c4a24"/><rect x="1506" y="872" width="52" height="28" fill="#0c4a24"/>
<rect x="1560" y="875" width="18" height="23" rx="2" fill="#b9bdb8"/><rect x="1562" y="877" width="14" height="4" fill="#eee"/><path d="M1569 884l3 5h-6zM1565 893h8" fill="none" stroke="#3aa04a" stroke-width="1.800"/>
<rect x="1581" y="873" width="19" height="26" rx="5" fill="#3a3a3a" stroke="#222"/>
<path d="M1588.500 881l4 5.500-4 5.500" fill="none" stroke="#ddd" stroke-width="1.200"/>

<!-- mouse cursor -->
<path d="M1147 649v15l3.500-3.300 2.500 5.500 2.200-1-2.500-5.400h4.800z" fill="#111" stroke="#fff" stroke-width=".7"/>

<!-- tab separators -->
<g fill="#8f989f"><rect x="371.500" y="46" width="1" height="22"/><rect x="391.500" y="46" width="1" height="22"/><rect x="411.500" y="46" width="1" height="22"/><rect x="277.500" y="46" width="1" height="22"/><rect x="459.500" y="46" width="1" height="22"/><rect x="479.500" y="46" width="1" height="22"/><rect x="499.500" y="46" width="1" height="22"/><rect x="519.500" y="46" width="1" height="22"/><rect x="582.500" y="46" width="1" height="22"/><rect x="602.500" y="46" width="1" height="22"/><rect x="652.500" y="46" width="1" height="22"/><rect x="715.500" y="46" width="1" height="22"/><rect x="735.500" y="46" width="1" height="22"/><rect x="755.500" y="46" width="1" height="22"/><rect x="847.500" y="46" width="1" height="22"/><rect x="867.500" y="46" width="1" height="22"/><rect x="887.500" y="46" width="1" height="22"/><rect x="1229.500" y="46" width="1" height="22"/></g>
</svg>
</body></html>
